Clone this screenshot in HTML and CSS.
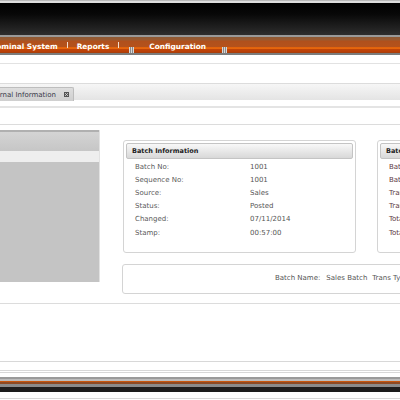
FILE: index.html
```html
<!DOCTYPE html>
<html>
<head>
<meta charset="utf-8">
<link rel="stylesheet" href="styles.css">
</head>
<body>
<div class="page">
  <div class="top-strip"></div>
  <header class="masthead"></header>
  <div class="masthead-edge"></div>
  <nav class="menubar">
    <span class="menu-item first">Nominal System</span>
    <span class="sep"></span>
    <span class="menu-item">Reports</span>
    <span class="sep"></span>
    <span class="grip"></span>
    <span class="menu-item conf">Configuration</span>
    <span class="grip"></span>
  </nav>
  <div class="menu-edge"></div>
  <div class="toolbar-line"></div>
  <div class="tabstrip">
    <div class="tab">
      <span class="tab-title">Journal Information</span>
      <svg class="tab-close" width="5" height="5" viewBox="0 0 5 5"><rect x="0" y="0" width="5" height="5" fill="#555"/><path d="M1 1L4 4M4 1L1 4" stroke="#ddd" stroke-width="0.8"/></svg>
    </div>
  </div>
  <div class="subbar"></div>
  <main class="content">
    <aside class="side-panel">
      <div class="side-head"></div>
      <div class="side-strip"></div>
      <div class="side-body"></div>
    </aside>
    <section class="boxes">
      <div class="box-row">
        <div class="box">
          <div class="box-head">Batch Information</div>
          <dl class="fields">
            <dt>Batch No:</dt><dd>1001</dd>
            <dt>Sequence No:</dt><dd>1001</dd>
            <dt>Source:</dt><dd>Sales</dd>
            <dt>Status:</dt><dd>Posted</dd>
            <dt>Changed:</dt><dd>07/11/2014</dd>
            <dt>Stamp:</dt><dd>00:57:00</dd>
          </dl>
        </div>
        <div class="box">
          <div class="box-head">Batch Totals</div>
          <dl class="fields">
            <dt>Batch Debits:</dt><dd></dd>
            <dt>Batch Credits:</dt><dd></dd>
            <dt>Trans Debits:</dt><dd></dd>
            <dt>Trans Credits:</dt><dd></dd>
            <dt>Total Debits:</dt><dd></dd>
            <dt>Total Credits:</dt><dd></dd>
          </dl>
        </div>
      </div>
      <div class="summary">
        <span class="sum-label">Batch Name:</span>
        <span class="sum-value">Sales Batch</span>
        <span class="sum-label">Trans Type:</span>
      </div>
    </section>
  </main>
  <div class="foot-line a"></div>
  <div class="foot-line b"></div>
  <div class="foot-line c"></div>
  <footer class="footer-bar"></footer>
  <div class="foot-white"></div>
</div>
</body>
</html>
```
FILE: styles.css
```css
html, body {
  margin: 0;
  padding: 0;
  background: #fff;
}
.page {
  width: 400px;
  height: 400px;
  overflow: hidden;
  font-family: "DejaVu Sans", Verdana, sans-serif;
  font-size: 7px;
  color: #555;
}
.top-strip {
  height: 3px;
  background: linear-gradient(#b8b8b8 0 1px, #dcdcdc 1px 3px);
}
.masthead {
  height: 32px;
  background: linear-gradient(#000 0%, #080808 35%, #2e2e2e 100%);
}
.masthead-edge {
  height: 2px;
  background: #9a9a9a;
}
.menubar {
  height: 16px;
  display: flex;
  align-items: center;
  background: linear-gradient(#8e5a36 0, #9a5a30 3px, #b0501c 4px, #b4521c 10px, #e0620c 10px, #e8680e 12px, #c24608 12px, #b83e06 15px, #9a4010 16px);
  white-space: nowrap;
}
.menu-item {
  font-weight: bold;
  font-size: 7.4px;
  color: #fff;
  line-height: 16px;
  position: relative;
  top: 1.5px;
}
.menu-item.first { margin-left: -10px; }
.sep {
  width: 1px;
  height: 6px;
  background: #f4e0d0;
  margin: -1px 9px 0 9px;
}
.grip {
  width: 5px;
  height: 6px;
  margin-top: 9px;
  background: repeating-linear-gradient(90deg, #d8d8d8 0 1px, #8a8a8a 1px 2px);
  margin-left: 1px;
}
.conf { margin: 0 15px 0 15px; }
.menu-edge {
  height: 2px;
  background: #7c7c7c;
}
.toolbar-line {
  height: 1px;
  margin-top: 8px;
  background: #e2e2e2;
}
.tabstrip {
  margin-top: 19px;
  height: 17px;
  border-top: 1px solid #dcdcdc;
  background: linear-gradient(#f6f6f6, #e4e4e4);
  box-sizing: border-box;
  display: flex;
  align-items: flex-end;
}
.tab {
  display: flex;
  align-items: center;
  height: 14px;
  margin-left: -12px;
  padding: 0 4px 0 0;
  background: linear-gradient(#dedede, #cfcfcf);
  border: 1px solid #bdbdbd;
  border-bottom: none;
  border-radius: 0 2px 0 0;
  box-sizing: border-box;
  margin-bottom: -1px;
}
.tab-title {
  color: #3a3a4a;
  font-size: 7px;
}
.tab-close { margin-left: 8px; }
.subbar {
  height: 2px;
  margin-top: 6px;
  background: #e4e4e4;
}
.content {
  margin-top: 16px;
  border-top: 1px solid #dcdcdc;
  border-bottom: 1px solid #dcdcdc;
  height: 178px;
  display: flex;
  align-items: flex-start;
  box-sizing: content-box;
}
.side-panel {
  width: 99px;
  margin-top: 5px;
  flex: none;
  border-right: 1px solid #e2e2e2;
}
.side-head {
  height: 19px;
  border-top: 2px solid #b0b0b0;
  background: linear-gradient(#d4d4d4, #c6c6c6);
}
.side-strip {
  height: 11px;
  background: #eeeeee;
}
.side-body {
  height: 120px;
  background: #c4c4c4;
}
.boxes {
  margin-left: 23px;
  margin-top: 15px;
  flex: none;
  width: 300px;
}
.box-row {
  display: flex;
  gap: 21px;
}
.box {
  flex: none;
  width: 233px;
  height: 113px;
  border: 1px solid #d4d4d4;
  border-radius: 3px;
  box-sizing: border-box;
  padding: 2px 2px 2px;
}
.box-head {
  height: 14px;
  line-height: 14px;
  border: 1px solid #c4c4c4;
  border-radius: 2px;
  background: linear-gradient(#f8f8f8, #d8d8d8);
  font-weight: bold;
  font-size: 6.5px;
  color: #222;
  padding-left: 5px;
}
.fields {
  margin: 1px 0 0 9px;
  display: grid;
  grid-template-columns: 115px 1fr;
  grid-auto-rows: 13.2px;
  align-items: center;
}
.fields dt, .fields dd {
  margin: 0;
  font-size: 7px;
}
.fields dt { color: #5a5a5a; }
.fields dd { color: #555; }
.box + .box .fields dt { color: #5e3a44; }
.summary {
  margin-top: 11px;
  margin-left: -1px;
  height: 30px;
  width: 400px;
  border: 1px solid #d4d4d4;
  border-radius: 3px;
  box-sizing: border-box;
  padding-left: 152px;
  padding-bottom: 2px;
  display: flex;
  align-items: center;
  white-space: nowrap;
  color: #555;
  font-size: 7px;
}
.sum-value { margin: 0 5px 0 6px; }
.foot-line {
  height: 1px;
  background: #d8d8d8;
}
.foot-line.a { margin-top: 57px; }
.foot-line.b { margin-top: 8px; }
.foot-line.c { margin-top: 1px; }
.footer-bar {
  margin-top: 4px;
  height: 15px;
  background: linear-gradient(#9a9a9a 0 2px, #bcbcbc 2px 4px, #c8560e 4px 5px, #8c4a24 5px 7px, #8a8a8a 7px 10px, #1c1c1c 10px 15px);
}
.foot-white {
  height: 6px;
  border-bottom: 1px solid #d8d8d8;
}
```
